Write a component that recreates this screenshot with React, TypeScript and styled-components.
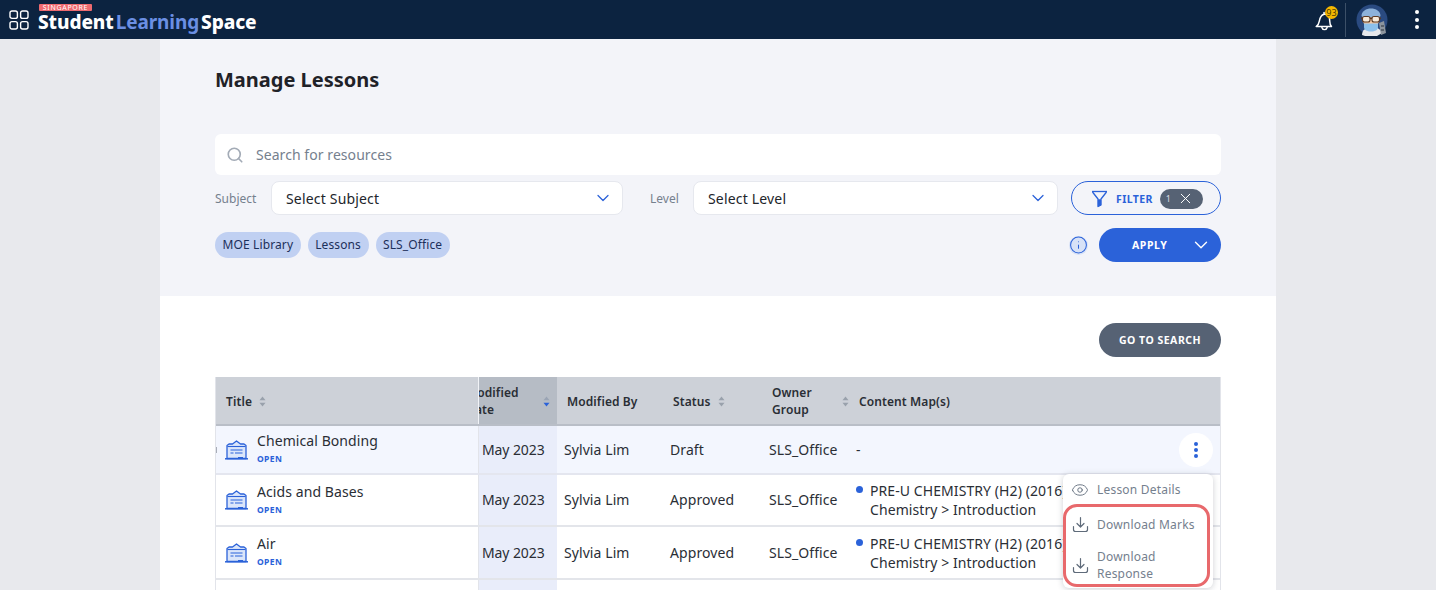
import styled, { createGlobalStyle } from "styled-components"
import { Search, ChevronDown, X, Eye, Info } from "lucide-react"

const GlobalStyle = createGlobalStyle`
  html, body {
    margin: 0;
    height: 100%;
    overflow: hidden;
  }
  body {
    font-family: "Noto Sans", "Open Sans", sans-serif;
    background-color: #e8e9ed;
    color: #22252b;
  }
  * {
    box-sizing: border-box;
  }
`

const PageWrapper = styled.div`
  height: 590px;
  overflow: hidden;
`

const TopBar = styled.header`
  height: 39px;
  background-color: #0c2340;
  display: flex;
  align-items: center;
  padding: 0 17px 0 9px;
`

const Logo = styled.div`
  margin-left: 9px;
  display: flex;
  flex-direction: column;
  align-items: flex-start;
  height: 39px;
  padding-top: 4px;
`

const LogoBadge = styled.span`
  background-color: #ee6a6f;
  color: #fff;
  font-size: 7px;
  line-height: 7px;
  height: 7px;
  width: 53px;
  text-align: center;
  letter-spacing: 0.7px;
  border-radius: 1px;
  margin-left: 1px;
`

const LogoText = styled.div`
  font-size: 19px;
  line-height: 22px;
  font-weight: 800;
  color: #fff;
  white-space: nowrap;
  letter-spacing: -0.1px;
`

const LogoAccent = styled.span`
  color: #6b8fe3;
  margin: 0 2px;
  font-weight: 700;
`

const TopBarRight = styled.div`
  margin-left: auto;
  display: flex;
  align-items: center;
`

const BellWrap = styled.div`
  position: relative;
  width: 24px;
  height: 24px;
  display: flex;
  align-items: center;
  justify-content: center;
`

const BellBadge = styled.span`
  position: absolute;
  top: -2px;
  right: -2px;
  width: 13px;
  height: 13px;
  border-radius: 50%;
  background-color: #f5b800;
  color: #4d3b00;
  font-size: 9px;
  line-height: 13px;
  text-align: center;
`

const BarDivider = styled.div`
  width: 1px;
  height: 34px;
  background-color: #3c5068;
  margin: 0 10px 0 9px;
`

const Kebab = styled.div<{ $color: string; $size: number; $gap: number }>`
  display: flex;
  flex-direction: column;
  align-items: center;
  gap: ${(p) => p.$gap}px;

  span {
    width: ${(p) => p.$size}px;
    height: ${(p) => p.$size}px;
    border-radius: 50%;
    background-color: ${(p) => p.$color};
  }
`

const TopKebab = styled(Kebab)`
  margin-left: 27px;
`

const Sheet = styled.main`
  width: 1116px;
  margin-left: 160px;
  background-color: #fff;
  height: 551px;
`

const FilterPanel = styled.section`
  height: 257px;
  background-color: #f3f4f9;
  padding: 27px 55px 0;
`

const PageTitle = styled.h1`
  margin: 0;
  font-size: 20px;
  line-height: 28px;
  font-weight: 700;
  color: #1f2228;
`

const SearchBox = styled.div`
  margin-top: 40px;
  height: 41px;
  background-color: #fff;
  border-radius: 6px;
  display: flex;
  align-items: center;
  padding-left: 11px;
  gap: 12px;
  color: #a3abb6;
  font-size: 14px;
  letter-spacing: 0.06px;

  span {
    color: #75808e;
  }
`

const FilterRow = styled.div`
  margin-top: 6px;
  display: flex;
  align-items: center;
  height: 34px;
`

const FieldLabel = styled.label<{ $width: number; $inset?: number }>`
  width: ${(p) => p.$width}px;
  padding-left: ${(p) => p.$inset || 0}px;
  font-size: 12px;
  color: #75808e;
  flex: none;
`

const SelectBox = styled.div<{ $width: number }>`
  width: ${(p) => p.$width}px;
  height: 34px;
  flex: none;
  background-color: #fff;
  border: 1px solid #e6e8ee;
  border-radius: 8px;
  display: flex;
  align-items: center;
  justify-content: space-between;
  padding: 0 9px 0 14px;
  font-size: 14px;
  letter-spacing: 0.18px;
  color: #22252b;

  svg {
    color: #2b62d9;
  }
`

const FilterButton = styled.div`
  margin-left: 13px;
  width: 150px;
  height: 34px;
  flex: none;
  border: 1px solid #2b62d9;
  border-radius: 17px;
  display: flex;
  align-items: center;
  padding-left: 19px;
  padding-top: 1px;
  color: #2b62d9;
  font-size: 10.5px;
  font-weight: 700;
  letter-spacing: 0.4px;
`

const FilterLabel = styled.span`
  margin-left: 8px;
`

const CountPill = styled.span`
  margin-left: 7px;
  width: 43px;
  height: 20px;
  border-radius: 10px;
  background-color: #566274;
  color: #d9dde3;
  font-size: 9px;
  font-weight: 400;
  display: flex;
  align-items: center;
  padding-left: 6px;
  gap: 6px;

  svg {
    color: #fff;
  }
`

const ActionRow = styled.div`
  height: 34px;
  display: flex;
  align-items: center;
  margin-top: 13px;
`

const Chip = styled.span`
  height: 26px;
  padding: 0 7.5px;
  margin-right: 7px;
  border-radius: 13px;
  background-color: #c0d0f2;
  color: #1c2f5a;
  font-size: 12px;
  letter-spacing: 0.12px;
  line-height: 26px;
  white-space: nowrap;
`

const InfoButton = styled.div`
  margin-left: auto;
  width: 19px;
  height: 19px;
  border-radius: 50%;
  background-color: #d8e2f7;
  color: #2b62d9;
  display: flex;
  align-items: center;
  justify-content: center;
`

const ApplyButton = styled.div`
  margin-left: 11px;
  width: 122px;
  height: 34px;
  border-radius: 17px;
  background-color: #2b62d9;
  color: #fff;
  font-size: 10.5px;
  font-weight: 700;
  letter-spacing: 0.6px;
  display: flex;
  align-items: center;
  justify-content: space-between;
  padding: 0 9px 0 33px;
`

const ResultPanel = styled.section`
  padding: 27px 55px 0;
`

const ResultBar = styled.div`
  display: flex;
  justify-content: flex-end;
  height: 34px;
`

const GoButton = styled.div`
  width: 122px;
  height: 34px;
  border-radius: 17px;
  background-color: #566274;
  color: #fff;
  font-size: 10.5px;
  font-weight: 700;
  letter-spacing: 0.5px;
  display: flex;
  align-items: center;
  justify-content: center;
`

const TableWrap = styled.div`
  position: relative;
  margin-top: 20px;
  border-left: 1px solid #e2e4ea;
  border-right: 1px solid #e2e4ea;
`

const Row = styled.div<{ $height: number; $bg?: string; $line?: string }>`
  display: grid;
  grid-template-columns: 263px 78px 106px 99px 87px 1fr;
  height: ${(p) => p.$height}px;
  background-color: ${(p) => p.$bg || "#fff"};
  border-bottom: ${(p) => (p.$line ? `2px solid ${p.$line}` : "2px solid #e3e5ea")};
`

const HeadCell = styled.div<{ $dark?: boolean; $divider?: boolean }>`
  display: flex;
  align-items: center;
  padding-left: 10px;
  padding-top: 1px;
  font-size: 12px;
  line-height: 17px;
  font-weight: 600;
  letter-spacing: 0.1px;
  color: #2a2e35;
  background-color: ${(p) => (p.$dark ? "#b6bcc5" : "transparent")};
  overflow: hidden;
  border-right: ${(p) => (p.$divider ? "1px solid #f1f3f7" : "0")};
`

const DateHead = styled(HeadCell)`
  padding-left: 0;
  justify-content: space-between;
  padding-right: 7px;
`

const ClippedHead = styled.span`
  display: block;
  width: 60px;
  margin-left: -13px;
  flex: none;
`

const SortIcon = styled.svg<{ $gap: number }>`
  margin-left: ${(p) => p.$gap}px;
  flex: none;
`

const Cell = styled.div`
  display: flex;
  align-items: center;
  padding-left: 7px;
  font-size: 14px;
  line-height: 20px;
  letter-spacing: 0.08px;
  color: #2a2e35;
  white-space: nowrap;
  overflow: hidden;
`

const TitleCell = styled(Cell)`
  padding-left: 9px;
  gap: 9px;
  border-right: 1px solid #e2e4ea;
`

const TitleStack = styled.div`
  display: flex;
  flex-direction: column;
  margin-top: -3px;
`

const OpenTag = styled.span`
  color: #2b62d9;
  font-size: 8.5px;
  line-height: 12px;
  margin-top: 2px;
  font-weight: 700;
  letter-spacing: 0.4px;
`

const DateCell = styled(Cell)`
  background-color: #e9edfa;
  padding-left: 3px;
  letter-spacing: -0.1px;
`

const MapCell = styled(Cell)`
  align-items: flex-start;
  flex-direction: column;
  justify-content: center;
  padding-top: 1px;
`

const MapLine = styled.div`
  display: flex;
  align-items: center;
  gap: 7px;
  margin-bottom: -1px;

  i {
    width: 7px;
    height: 7px;
    border-radius: 50%;
    background-color: #2b62d9;
    margin-top: -3px;
  }
`

const MapSub = styled.div`
  padding-left: 14px;
`

const RowGrip = styled.span`
  position: absolute;
  top: 70px;
  left: 0;
  width: 1px;
  height: 6px;
  background-color: #a9aeb8;
`

const RowAction = styled.div`
  position: absolute;
  top: 56px;
  right: 7px;
  width: 34px;
  height: 34px;
  border-radius: 50%;
  background-color: #fff;
  display: flex;
  align-items: center;
  justify-content: center;
`

const Menu = styled.div`
  position: absolute;
  top: 97px;
  right: 7px;
  width: 150px;
  height: 114px;
  background-color: #fff;
  border-radius: 6px;
  box-shadow: 0 1px 6px rgba(30, 40, 60, 0.22);
  color: #75808e;
  font-size: 12px;
  letter-spacing: 0.2px;
`

const MenuItem = styled.div`
  display: flex;
  align-items: center;
  gap: 8px;
  padding-left: 8px;
  height: 31px;
  color: #75808e;
  line-height: 17px;

  svg {
    flex: none;
    color: #5f6b7a;
  }
`

const Highlight = styled.div`
  width: 147px;
  height: 83px;
  border: 3px solid #e8696c;
  border-radius: 14px;
  margin-top: -1px;
  padding-top: 2px;
`

const HighlightItem = styled(MenuItem)`
  padding-left: 6px;
  gap: 8px;
`

const TallItem = styled(HighlightItem)`
  height: 46px;
  margin-top: 2px;
`

function GridIcon() {
  return (
    <svg width="20" height="20" viewBox="0 0 20 20" fill="none" stroke="#fff" strokeWidth="1.4">
      <rect x="1" y="1" width="7.4" height="7.4" rx="2" />
      <rect x="11.6" y="1" width="7.4" height="7.4" rx="2" />
      <rect x="1" y="11.6" width="7.4" height="7.4" rx="2" />
      <rect x="11.6" y="11.6" width="7.4" height="7.4" rx="2" />
    </svg>
  )
}

function BellIcon() {
  return (
    <svg width="21" height="22" viewBox="0 0 24 24" fill="none" stroke="#fff" strokeWidth="1.7" strokeLinejoin="round" strokeLinecap="round">
      <path d="M2.5 19.5c2-1.5 3-3 3.500-6 .6-3.500 1.500-7 5.500-8 1.500-.3 3 0 4 .8 2 1.700 2.500 4.200 2.500 7 0 2.500.5 4.500 2 6.200z" />
      <path d="M9 20.500c.5 1.800 1.500 2.500 3 2.500s2.500-.8 3-2.500" />
      <path d="M11.500 5V3.500" />
    </svg>
  )
}

function FunnelIcon() {
  return (
    <svg width="17" height="18" viewBox="0 0 17 18" fill="none" stroke="currentColor" strokeWidth="1.3" strokeLinejoin="round">
      <path d="M1 1.500h15" />
      <path d="M1.500 2l5.500 7v7.500l3-1.500V9l5.500-7" />
      <path d="M7.500 10v6l2-1v-5z" fill="currentColor" />
    </svg>
  )
}

function Avatar() {
  return (
    <svg width="32" height="32" viewBox="0 0 32 32">
      <circle cx="16" cy="16" r="15.500" fill="#2a4a80" />
      <path d="M6 31c0-5 4-8 10-8s9 3 10 6l-5 3H9z" fill="#e6e8ec" />
      <path d="M23 19l5-2 2 12-5 2z" fill="#8d959e" />
      <path d="M25 21h3v2h-3zM25 25h3v2h-3z" fill="#5a626c" />
      <ellipse cx="15" cy="15" rx="8.500" ry="9" fill="#f5c9a5" />
      <path d="M5.500 12c0-10 19-10 19 0l-1 1H6.500z" fill="#8db2da" />
      <rect x="5" y="13.500" width="20" height="1.600" fill="#5c3a24" />
      <rect x="6.500" y="12.500" width="7.500" height="5.500" rx="2" fill="#f8ead9" stroke="#5c3a24" strokeWidth="1.100" />
      <rect x="16" y="12.500" width="7.500" height="5.500" rx="2" fill="#f8ead9" stroke="#5c3a24" strokeWidth="1.100" />
      <path d="M8 19.500h14v3.500c0 3-3 4.500-7 4.500s-7-1.500-7-4.500z" fill="#8cc0ec" />
    </svg>
  )
}

function SortArrows({ active, gap = 7 }: { active?: boolean; gap?: number }) {
  return (
    <SortIcon $gap={gap} width="7" height="11" viewBox="0 0 7 11">
      <path d="M3.500 0.500L6.500 4.200H0.500z" fill={active ? "#9aa4b4" : "#99a1ac"} />
      <path d="M3.500 10.500L6.500 6.800H0.500z" fill={active ? "#2b62d9" : "#99a1ac"} />
    </SortIcon>
  )
}

function LessonIcon() {
  return (
    <svg width="23" height="20" viewBox="0 0 23 20" fill="none" style={{ flex: "none" }}>
      <path d="M2 18.500V5.500L4 4h3.500l4-3 4 3H19l2 1.500v13z" fill="#dbe6fa" stroke="#2b62d9" strokeWidth="1.300" strokeLinejoin="round" />
      <path d="M0 18.800h23" stroke="#2b62d9" strokeWidth="1.500" />
      <path d="M2.500 6.500h18" stroke="#2b62d9" strokeWidth="1.100" />
      <path d="M5.500 10h12M5.500 13h3M10 13h7.500" stroke="#2b62d9" strokeWidth="1.100" />
      <path d="M13 17h5v1.500h-5z" fill="#2b62d9" />
    </svg>
  )
}

function DownloadIcon() {
  return (
    <svg width="17" height="17" viewBox="0 0 17 17" fill="none" stroke="currentColor" strokeWidth="1.2" strokeLinecap="round" strokeLinejoin="round">
      <path d="M8.500 1.500v9M5 7.500l3.500 3.500L12 7.500" />
      <path d="M1.500 10.500v3a2 2 0 0 0 2 2h10a2 2 0 0 0 2-2v-3" />
    </svg>
  )
}

const lessons = [
  { title: "Chemical Bonding", status: "Draft", height: 49, bg: "#f3f6fe", line: "#e4e6ef" },
  { title: "Acids and Bases", status: "Approved", height: 52 },
  { title: "Air", status: "Approved", height: 53 },
]

function App() {
  return (
    <PageWrapper>
      <GlobalStyle />
      <TopBar>
        <GridIcon />
        <Logo>
          <LogoBadge>SINGAPORE</LogoBadge>
          <LogoText>
            Student<LogoAccent>Learning</LogoAccent>Space
          </LogoText>
        </Logo>
        <TopBarRight>
          <BellWrap>
            <BellIcon />
            <BellBadge>93</BellBadge>
          </BellWrap>
          <BarDivider />
          <Avatar />
          <TopKebab $color="#fff" $size={4} $gap={3.5}>
            <span />
            <span />
            <span />
          </TopKebab>
        </TopBarRight>
      </TopBar>
      <Sheet>
        <FilterPanel>
          <PageTitle>Manage Lessons</PageTitle>
          <SearchBox>
            <Search size={18} strokeWidth={2.2} />
            <span>Search for resources</span>
          </SearchBox>
          <FilterRow>
            <FieldLabel $width={56}>Subject</FieldLabel>
            <SelectBox $width={352}>
              Select Subject
              <ChevronDown size={20} strokeWidth={1.5} />
            </SelectBox>
            <FieldLabel $width={70} $inset={27}>Level</FieldLabel>
            <SelectBox $width={365}>
              Select Level
              <ChevronDown size={20} strokeWidth={1.5} />
            </SelectBox>
            <FilterButton>
              <FunnelIcon />
              <FilterLabel>FILTER</FilterLabel>
              <CountPill>
                1
                <X size={17} strokeWidth={1.4} />
              </CountPill>
            </FilterButton>
          </FilterRow>
          <ActionRow>
            <Chip>MOE Library</Chip>
            <Chip>Lessons</Chip>
            <Chip>SLS_Office</Chip>
            <InfoButton>
              <Info size={20} strokeWidth={1.3} />
            </InfoButton>
            <ApplyButton>
              APPLY
              <ChevronDown size={22} strokeWidth={1.5} />
            </ApplyButton>
          </ActionRow>
        </FilterPanel>
        <ResultPanel>
          <ResultBar>
            <GoButton>GO TO SEARCH</GoButton>
          </ResultBar>
          <TableWrap>
            <Row $height={49} $bg="#cdd1d8" $line="#b9bec7">
              <HeadCell $divider>
                Title
                <SortArrows />
              </HeadCell>
              <DateHead $dark>
                <ClippedHead>Modified Date</ClippedHead>
                <SortArrows active />
              </DateHead>
              <HeadCell>Modified By</HeadCell>
              <HeadCell>
                Status
                <SortArrows />
              </HeadCell>
              <HeadCell>
                Owner Group
                <SortArrows gap={5} />
              </HeadCell>
              <HeadCell>Content Map(s)</HeadCell>
            </Row>
            {lessons.map((l) => (
              <Row key={l.title} $height={l.height} $bg={l.bg} $line={l.line}>
                <TitleCell>
                  <LessonIcon />
                  <TitleStack>
                    {l.title}
                    <OpenTag>OPEN</OpenTag>
                  </TitleStack>
                </TitleCell>
                <DateCell>May 2023</DateCell>
                <Cell>Sylvia Lim</Cell>
                <Cell>{l.status}</Cell>
                <Cell>SLS_Office</Cell>
                {l.status === "Draft" ? (
                  <Cell>-</Cell>
                ) : (
                  <MapCell>
                    <MapLine>
                      <i />
                      PRE-U CHEMISTRY (H2) (2016)
                    </MapLine>
                    <MapSub>Chemistry &gt; Introduction</MapSub>
                  </MapCell>
                )}
              </Row>
            ))}
            <Row $height={40}>
              <TitleCell />
              <DateCell />
            </Row>
            <RowGrip />
            <RowAction>
              <Kebab $color="#2b62d9" $size={4} $gap={2}>
                <span />
                <span />
                <span />
              </Kebab>
            </RowAction>
            <Menu>
              <MenuItem>
                <Eye size={18} strokeWidth={1.2} />
                Lesson Details
              </MenuItem>
              <Highlight>
                <HighlightItem>
                  <DownloadIcon />
                  Download Marks
                </HighlightItem>
                <TallItem>
                  <DownloadIcon />
                  <span>
                    Download
                    <br />
                    Response
                  </span>
                </TallItem>
              </Highlight>
            </Menu>
          </TableWrap>
        </ResultPanel>
      </Sheet>
    </PageWrapper>
  )
}

export default App
